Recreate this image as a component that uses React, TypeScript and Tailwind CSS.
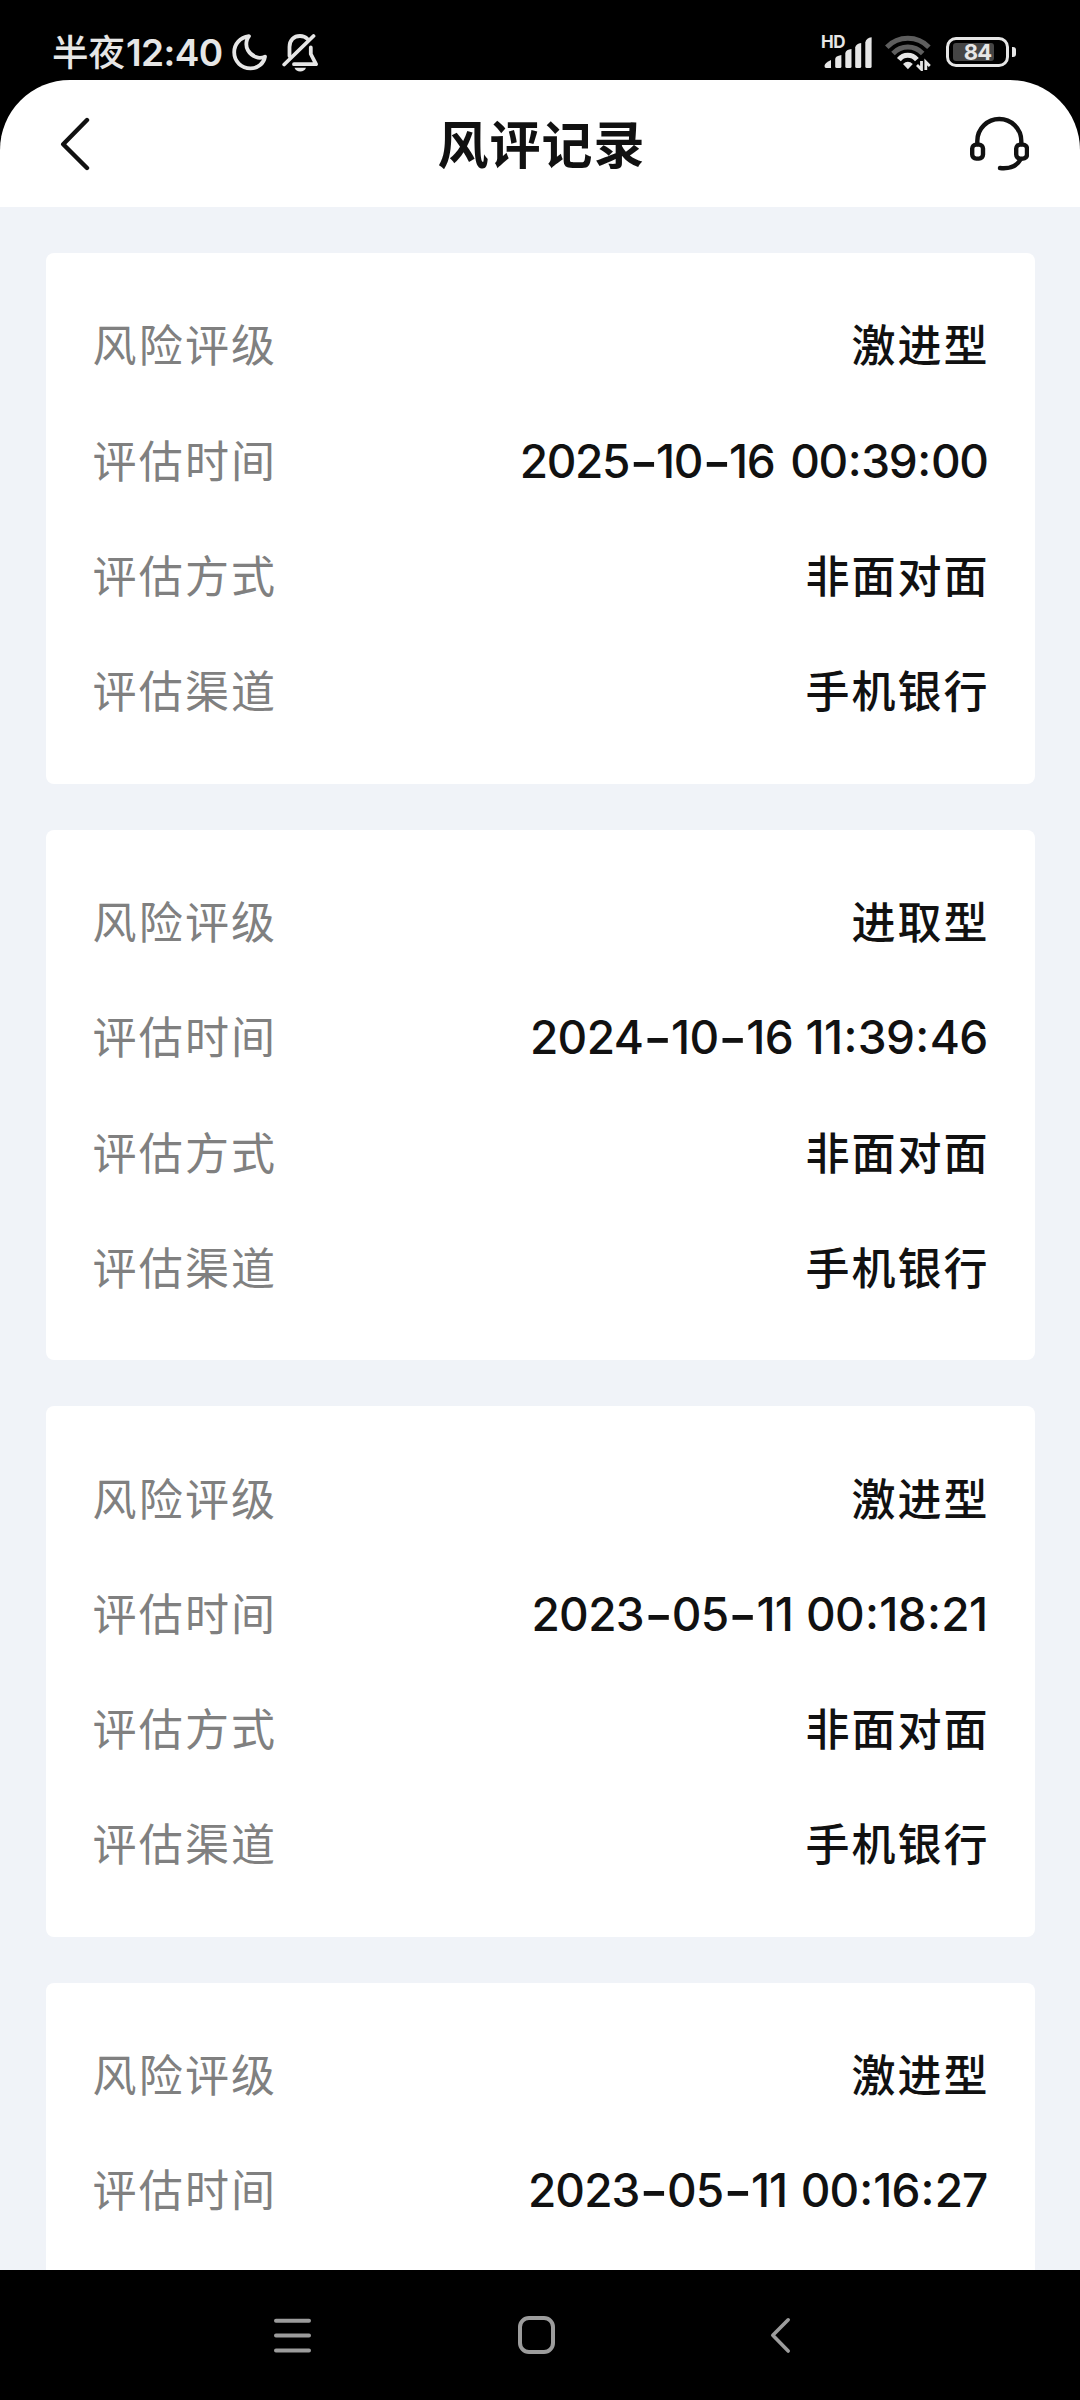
import type { ReactNode } from 'react';

type RiskRecord = {
  level: string;
  time: string;
  method?: string;
  channel?: string;
  // letter and word spacing of the time differ per record
  timeClass: string;
};

const records: RiskRecord[] = [
  { level: '激进型', time: '2025-10-16 00:39:00', method: '非面对面', channel: '手机银行', timeClass: 'tracking-[-1.4px] [word-spacing:5px]' },
  { level: '进取型', time: '2024-10-16 11:39:46', method: '非面对面', channel: '手机银行', timeClass: 'tracking-[-0.65px] [word-spacing:1px]' },
  { level: '激进型', time: '2023-05-11 00:18:21', method: '非面对面', channel: '手机银行', timeClass: 'tracking-[-0.65px] [word-spacing:1px]' },
  { level: '激进型', time: '2023-05-11 00:16:27', timeClass: 'tracking-[-0.9px] [word-spacing:2px]' },
];

function StatusBar() {
  return (
    <div className="flex h-20 shrink-0 items-start justify-between bg-black text-[#e6e6e6]">
      <div className="flex items-start pl-[52px]">
        <span className="mt-[30px] flex h-11 items-center whitespace-nowrap font-medium leading-none">
          <span className="-mt-[2px] text-[36.5px]">半夜</span>
          <span className="ml-px font-['Inter'] text-[37px] font-semibold tracking-[-0.6px]">12:40</span>
        </span>
        <svg className="ml-[9px] mt-[33px] h-[38px] w-[36px]" viewBox="0 0 36 38" fill="none" stroke="currentColor" strokeWidth="3.8" strokeLinejoin="round">
          <path d="M17 3.2C8 4.5 2.2 11 2.2 19.3C2.2 28.6 9.5 35.4 18.5 35.4C26 35.4 31.8 30.5 33 23.6C30 25 27 25.3 24 24C16.5 21 13 14.5 14.8 7.5C15.3 5.8 16 4.5 17 3.2Z" />
        </svg>
        <svg className="ml-[14px] mt-[33px] h-[40px] w-[36px]" viewBox="0 0 36 40" fill="none" stroke="currentColor" strokeWidth="3.8" strokeLinecap="round" strokeLinejoin="round">
          <path d="M7.5 23V14C7.5 7 12 3 18 3C21 3 23.5 4 25.5 6" />
          <path d="M28.8 14.5V21L34 31.2H12" />
          <path d="M2.2 31.5L31.5 3" />
          <path d="M12.5 34.8H24C23 37.4 21 38.4 18.2 38.4C15.5 38.4 13.5 37.4 12.5 34.8Z" fill="currentColor" stroke="none" />
        </svg>
      </div>
      <div className="flex items-start pr-[71px]">
        <div className="relative mt-[37px] h-8 w-[50px]">
          <span className="absolute -left-px -top-[3px] font-['Inter'] text-[17px] font-bold leading-none tracking-[-0.5px]">HD</span>
          <svg className="h-8 w-[50px]" viewBox="0 0 50 32" fill="currentColor">
            <path d="M2.5 29Q2.5 26 9 23V31H4Q2.5 31 2.5 29Z" />
            <path d="M13.2 22Q13.2 19 19.4 18V29.5Q19.4 31 18 31H14.7Q13.2 31 13.2 29.5Z" />
            <path d="M23.3 16Q24 12.5 29.5 12V29.5Q29.5 31 28 31H24.8Q23.3 31 23.3 29.5Z" />
            <path d="M33.2 10.5Q34 6.5 39.2 6V29.5Q39.2 31 37.7 31H34.7Q33.2 31 33.2 29.5Z" />
            <path d="M43.3 5.5Q44 1 49.6 0.3V29.5Q49.6 31 48 31H44.8Q43.3 31 43.3 29.5Z" />
          </svg>
        </div>
        <svg className="ml-[13px] mt-[35px] h-9 w-[47px]" viewBox="0 0 47 36" fill="none" strokeWidth="5">
          <path d="M1.8 12.2C13.5 0.4 32.2 0.4 43.9 12.2" stroke="#5e5e5e" />
          <path d="M8 18.4C16.3 10 29.4 10 37.7 18.4" stroke="#5e5e5e" />
          <path d="M13.9 24.6C18.5 18.9 27 18.9 31.9 24.6" stroke="currentColor" />
          <path d="M22.9 34.3L18 29Q22.9 24.6 27.8 29Z" fill="currentColor" stroke="none" />
          <path d="M36.5 26V34.5L32 30M40.8 35V27L44.8 31" stroke="currentColor" strokeWidth="2.8" />
        </svg>
        <div className="relative ml-[14px] mt-[37px] flex h-[30px] w-[63px] items-center justify-center rounded-[10px] border-[3px] border-[#e6e6e6]">
          <span className="absolute left-[4px] top-[3px] h-[18px] w-[41px] rounded-[3px] bg-[#454545]" />
          <span className="relative font-['Inter'] text-[22px] font-bold leading-none tracking-[-0.8px]">84</span>
          <span className="absolute -right-[10px] top-[7px] h-[10px] w-1 rounded-r-[3px] bg-[#e6e6e6]" />
        </div>
      </div>
    </div>
  );
}

function Header() {
  return (
    <div className="shrink-0 bg-black">
      <header className="flex h-[127px] items-center justify-between rounded-t-[70px] bg-white pl-[60px] pr-[51px] text-[#111]">
        <svg className="h-[54px] w-[32px]" viewBox="0 0 32 54" fill="none" stroke="currentColor" strokeWidth="4.4" strokeLinecap="round" strokeLinejoin="round">
          <path d="M27 3L3.2 27.2L27 51" />
        </svg>
        <h1 className="-mt-[3px] ml-[22px] text-[51px] font-bold leading-none tracking-[1px]">风评记录</h1>
        <svg className="h-[56px] w-[60px]" viewBox="0 0 60 56" fill="none" stroke="currentColor" strokeWidth="4.4" strokeLinecap="round">
          <path d="M8.3 28V25C8.3 12.5 18.4 3 30.3 3C42.2 3 52.3 12.5 52.3 25V28" />
          <rect x="3.2" y="28.6" width="10.8" height="14" rx="4" />
          <rect x="47.2" y="28.6" width="10.8" height="14" rx="4" />
          <path d="M51.5 43.5C48 50 41 53 31 52" />
        </svg>
      </header>
    </div>
  );
}

function Row({ label, children }: { label: string; children: ReactNode }) {
  return (
    <div className="flex h-[115.25px] items-center justify-between whitespace-nowrap text-[44px] leading-none text-[#111]">
      <span className="-mt-[4px] tracking-[2.2px] text-[#808080]">{label}</span>
      {children}
    </div>
  );
}

function TextValue({ children }: { children: ReactNode }) {
  return <span className="-mr-[2px] -mt-[4px] font-medium tracking-[2px]">{children}</span>;
}

function TimeValue({ time, className }: { time: string; className: string }) {
  return (
    <span className={`whitespace-pre font-['Inter'] text-[46px] font-medium ${className}`}>
      {time.split(/([-:])/).map((part, i) => {
        if (part === '-') {
          return <span key={i} className="mx-[3.5px] inline-block scale-x-135 font-semibold">-</span>;
        }
        if (part === ':') {
          return <span key={i} className="relative -top-[2px] mx-px">:</span>;
        }
        return part;
      })}
    </span>
  );
}

function RecordCard({ record }: { record: RiskRecord }) {
  return (
    <div className="min-h-[530.6px] shrink-0 rounded-lg bg-white px-[47px] py-[34.8px]">
      <Row label="风险评级">
        <TextValue>{record.level}</TextValue>
      </Row>
      <Row label="评估时间">
        <TimeValue time={record.time} className={record.timeClass} />
      </Row>
      {record.method && (
        <Row label="评估方式">
          <TextValue>{record.method}</TextValue>
        </Row>
      )}
      {record.channel && (
        <Row label="评估渠道">
          <TextValue>{record.channel}</TextValue>
        </Row>
      )}
    </div>
  );
}

function NavBar() {
  return (
    <nav className="flex h-[130px] shrink-0 items-start bg-black pl-[274px] pt-[46px] text-[#9c9c9c]">
      <svg className="h-[39px] w-[37px]" viewBox="0 0 37 39" stroke="currentColor" strokeWidth="4" strokeLinecap="round">
        <path d="M2 4.7H35M2 19.6H35M2 34.5H35" />
      </svg>
      <span className="ml-[207px] h-[38px] w-[37px] rounded-[11px] border-4 border-[#9c9c9c]" />
      <svg className="ml-[215px] h-[39px] w-[22px]" viewBox="0 0 22 39" fill="none" stroke="currentColor" strokeWidth="3.6" strokeLinecap="round" strokeLinejoin="round">
        <path d="M18.2 3.8L2.8 19.3L18.2 35" />
      </svg>
    </nav>
  );
}

export default function App() {
  return (
    <div className="flex h-[2400px] w-[1080px] flex-col overflow-hidden bg-[#f0f3f8] font-['Noto_Sans_CJK_SC',sans-serif]">
      <StatusBar />
      <Header />
      <main className="flex min-h-0 flex-1 flex-col gap-[46px] overflow-hidden px-[45.5px] pt-[46px]">
        {records.map((record) => (
          <RecordCard key={record.time} record={record} />
        ))}
      </main>
      <NavBar />
    </div>
  );
}
